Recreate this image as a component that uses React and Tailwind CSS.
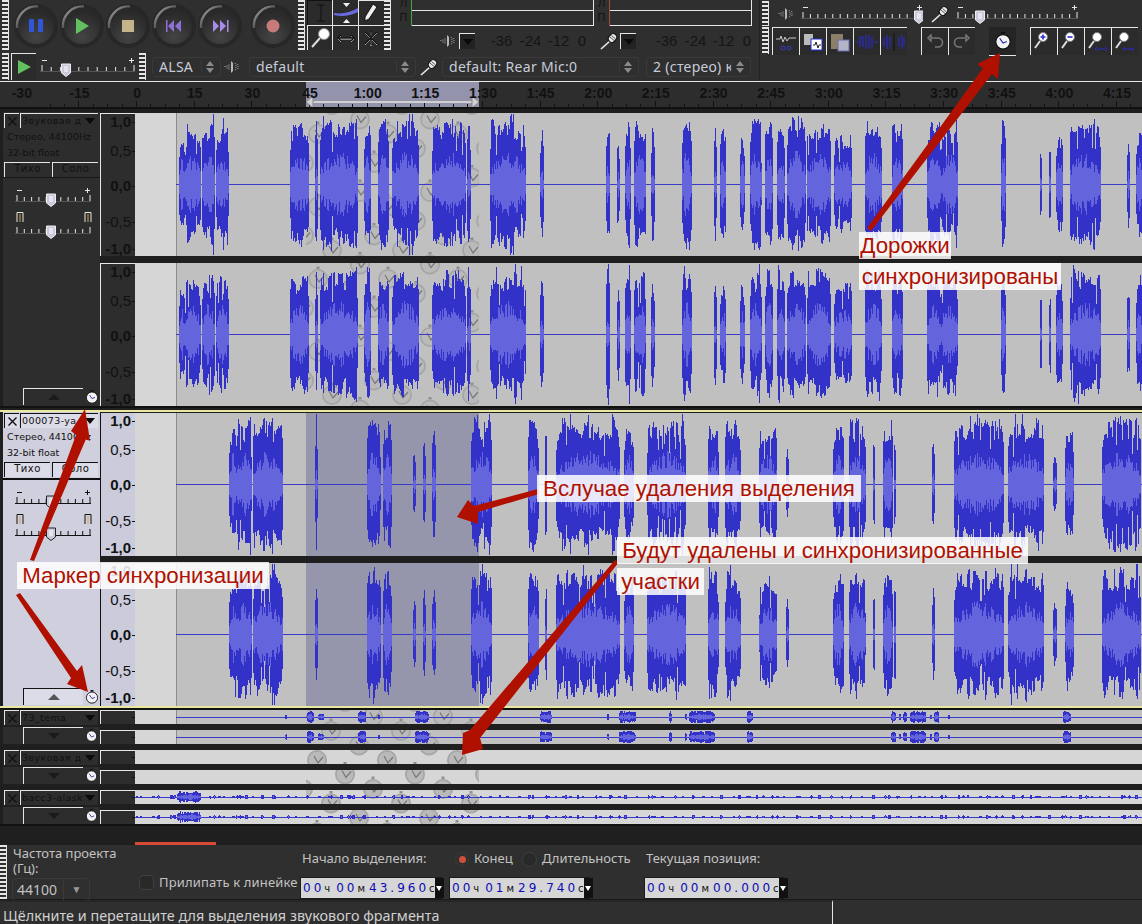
import React from "react";

const UI_FONT = { fontFamily: '"Noto Sans", "Open Sans", sans-serif' };

// waveform clusters: [from x, to x, amplitude] in page pixels
const CLUSTERS_A = [
  [179, 184, 0.85], [185, 200, 0.9], [202, 214, 0.95], [216, 228, 0.92], [290, 308, 0.95], [315, 317, 1], [320, 357, 1],
  [364, 370, 1], [378, 388, 1.05], [392, 418, 1], [432, 465, 1], [467, 470, 0.9], [490, 525, 1], [540, 543, 0.85],
  [606, 609, 1.05], [617, 619, 0.75], [625, 630, 0.95], [634, 645, 1], [651, 654, 0.85], [682, 691, 1], [714, 716, 0.85],
  [720, 725, 0.85], [740, 744, 0.8], [750, 761, 1], [765, 772, 1], [777, 784, 0.95], [787, 805, 1], [807, 830, 1],
  [834, 851, 0.8], [865, 881, 1], [892, 902, 0.95], [927, 940, 0.98], [941, 957, 0.95], [1001, 1005, 1], [1040, 1041, 0.75],
  [1049, 1050, 0.85], [1056, 1062, 0.8], [1070, 1100, 1], [1127, 1129, 0.8], [1136, 1142, 0.8],
];
const CLUSTERS_B = [
  [229, 236, 0.95], [237, 251, 0.98], [253, 282, 1], [315, 317, 1], [367, 380, 1.05], [383, 391, 1], [413, 415, 0.65],
  [423, 425, 0.72], [432, 435, 0.85], [471, 491, 1], [528, 538, 1], [545, 546, 1], [556, 619, 1], [624, 633, 0.9],
  [647, 685, 1], [708, 718, 0.95], [725, 740, 0.95], [759, 776, 0.9], [786, 788, 0.6], [833, 843, 0.95], [849, 865, 1],
  [873, 874, 0.8], [883, 892, 0.98], [894, 895, 0.9], [932, 934, 0.85], [954, 1003, 1], [1008, 1043, 1], [1053, 1056, 0.5],
  [1065, 1073, 0.78], [1102, 1140, 1],
];
const CLUSTERS_C = [
  [285, 286, 0.6], [307, 313, 1], [318, 323, 0.6], [358, 365, 1], [378, 379, 0.4], [415, 428, 1], [540, 551, 0.95],
  [607, 608, 0.7], [619, 635, 1], [669, 671, 0.9], [685, 686, 0.7], [689, 714, 1], [747, 752, 1], [891, 895, 0.8],
  [899, 900, 0.7], [903, 906, 0.9], [910, 925, 1], [930, 931, 0.6], [934, 938, 1], [948, 949, 0.4], [1063, 1070, 1],
];

function rng(seed) {
  let s = seed;
  return () => {
    s = (s * 16807) % 2147483647;
    return s / 2147483647;
  };
}

function buildClusters(seed) {
  // the noise track, small ticks the whole way along plus one bump
  const r = rng(seed);
  const out = [[177, 200, 0.85]];
  for (let x = 136; x < 1140; x += 2 + Math.floor(r() * 12)) {
    out.push([x, x + 1 + Math.floor(r() * 2), 0.2 + r() * 0.2]);
  }
  return out;
}

function wavePaths(clusters, H, seed, startX) {
  const r = rng(seed);
  const cy = H / 2;
  const full = H * 0.47;
  let peak = "";
  let rms = "";
  clusters.forEach(([x0, x1, amp]) => {
    const w = x1 - x0;
    let base = 0.8;
    let hold = 0;
    for (let x = x0; x <= x1; x++) {
      if (hold <= 0) {
        base = 0.66 + r() * 0.32;
        hold = 1 + Math.floor(r() * 3);
      }
      hold--;
      const t = w === 0 ? 0.5 : (x - x0) / w;
      const edge = x - x0 < 1 || x1 - x < 1 ? 0.78 : 1;
      let a = amp * base * edge;
      if (r() > 0.93) a *= 1.2;
      if (w > 10 && r() > 0.95) a *= 0.6;
      const up = Math.min(cy - 1, full * a * (0.94 + r() * 0.1));
      const down = Math.min(cy - 1, full * a * (0.9 + r() * 0.14));
      const px = x - startX + 0.5;
      peak += `M${px} ${(cy - up).toFixed(0)}V${(cy + down).toFixed(0)}`;
      const hump = 0.5 + 0.5 * Math.sin(Math.PI * t);
      const rr = full * amp * hump * (0.24 + r() * 0.26) * (w < 4 ? 0.6 : 1);
      rms += `M${px} ${(cy - Math.min(rr, up)).toFixed(0)}V${(cy + Math.min(rr, down)).toFixed(0)}`;
    }
  });
  return { peak, rms };
}

function Clock({ x, y }) {
  return (
    <g transform={`translate(${x} ${y})`}>
      <rect x="-1.5" y="-12.5" width="3" height="2.5" fill="#8f8f8f" />
      <circle r="10" fill="#a6a6a6" />
      <circle r="8.2" fill="#bababa" />
      <path d="M-3 -4L1 3L6 -3" fill="none" stroke="#777" strokeWidth="1.2" />
    </g>
  );
}

// one channel of the wave area, starts at page x=135
function Wave({ H, top, clusters, seed, selected, clock, from = 176, line = true, bg = "#c0c0c0" }) {
  const W = 1007;
  const { peak, rms } = wavePaths(clusters, H, seed, 135);
  const clocks = [];
  if (clock) {
    for (let k = -60; k < 60; k++) {
      const y = clock[1] + 14.5 * k;
      if (y < top - 14 || y > top + H + 14) continue;
      for (let m = -20; m < 20; m++) {
        const x = clock[0] + 28 * k + 70 * m;
        if (x > 290 && x < 495) clocks.push([x - 306, y - top]);
      }
    }
  }
  return (
    <svg width={W} height={H} className="block shrink-0">
      <rect width={W} height={H} fill="#d6d6d6" />
      <rect x={from - 135} width={W} height={H} fill={bg} />
      {from < 1000 && bg === "#c0c0c0" && <rect x={from - 135} width="1" height={H} fill="#8c8c8c" />}
      {selected && <rect x="171" width="173" height={H} fill="#9595ab" />}
      {clocks.length > 0 && (
        <svg x="171" width="173" height={H}>
          {clocks.map(([x, y], i) => (
            <Clock key={i} x={x} y={y} />
          ))}
        </svg>
      )}
      {line && <rect x={from - 135} y={Math.floor(H / 2)} width={W} height="1" fill="#3a3ac8" />}
      <path d={peak} stroke="#3232c8" strokeWidth="1" shapeRendering="crispEdges" />
      <path d={rms} stroke="#6464dc" strokeWidth="1" shapeRendering="crispEdges" />
    </svg>
  );
}

function Grip({ className = "" }) {
  return (
    <div
      className={`w-[7px] shrink-0 border-r border-[#e6e6e6] bg-[repeating-linear-gradient(180deg,#e6e6e6_0px,#e6e6e6_2px,transparent_2px,transparent_4px)] ${className}`}
    />
  );
}

function SyncIcon({ size = 14 }) {
  return (
    <svg width={size} height={size} viewBox="0 0 14 14" className="block shrink-0">
      <rect x="5.5" y="0" width="3" height="1.6" fill="#111" />
      <circle cx="7" cy="7.6" r="5.6" fill="#f2f2f2" stroke="#111" strokeWidth="0.9" />
      <path d="M4.5 5L7 8.6L10 7.4" fill="none" stroke="#2a2ab0" strokeWidth="0.9" />
    </svg>
  );
}

function TransportButton({ children }) {
  return (
    <svg width="46" height="50" viewBox="0 0 46 50" className="block shrink-0">
      <defs>
        <linearGradient id="arc" x1="0" y1="0" x2="1" y2="1">
          <stop offset="0" stopColor="#b4b4b4" />
          <stop offset="0.65" stopColor="#3c3c3c" />
        </linearGradient>
        <radialGradient id="well" cx="0.5" cy="0.8" r="0.7">
          <stop offset="0" stopColor="#444" />
          <stop offset="1" stopColor="#292929" />
        </radialGradient>
      </defs>
      <circle cx="23" cy="25" r="22" fill="#232323" opacity="0.7" />
      <circle cx="23" cy="25" r="18" fill="url(#well)" />
      <path d="M4 27A19.5 19.5 0 0 1 25 5.5" fill="none" stroke="url(#arc)" strokeWidth="2.4" />
      {children}
    </svg>
  );
}

function ToolButton({ children, black, className = "" }) {
  return (
    <div
      className={`flex h-[25px] w-[26px] shrink-0 items-center justify-center border-t border-l ${
        black ? "border-[#111]" : "border-[#e6e6e6]"
      } bg-[#2b2b2b] ${className}`}
    >
      {children}
    </div>
  );
}

function Slider({ width, thumb, ticks = 11, labels = true, light }) {
  const stroke = light ? "#111" : "#e6e6e6";
  const ln = light ? "#111" : "#555";
  const y = 10;
  const marks = [];
  for (let i = 0; i < ticks; i++) marks.push(1.5 + (i * (width - 3)) / (ticks - 1));
  return (
    <svg width={width} height="20" className="block shrink-0">
      {labels && <rect x="2" y="3" width="5" height="1" fill={stroke} />}
      {labels && <path d={`M${width - 6} 3.5h5M${width - 3.5} 1v5`} stroke={stroke} />}
      <rect x="0" y={y + 4} width={width} height="1" fill={ln} />
      {marks.map((m, i) => (
        <rect key={i} x={m} y={i === 0 || i === ticks - 1 ? y - 2 : y} width="1" height={i === 0 || i === ticks - 1 ? 6 : 4} fill={stroke} />
      ))}
      <path
        d={`M${thumb - 4.5} 7h9v9l-4.5 3.5l-4.5 -3.5z`}
        fill="#c9cadb"
        stroke={light ? "#222" : "#eee"}
      />
      <path d={`M${thumb - 2} 10h4M${thumb - 2} 12h4M${thumb - 2} 14h4`} stroke="#fff" />
    </svg>
  );
}

function Speaker({ color = "#b8b8b8" }) {
  return (
    <svg width="16" height="16" viewBox="0 0 16 16" className="block shrink-0">
      <path d="M6 5.5v5M4 6.5v3M2 7v2" stroke={color} strokeDasharray="1 1" />
      <path d="M8 2l2 2v8l-2 2z" fill={color} />
      <path d="M12 4q2 4 0 8M14.5 5q1 3 0 6" stroke={color} fill="none" strokeDasharray="1 1" />
    </svg>
  );
}

function Mic({ size = 18 }) {
  return (
    <svg width={size} height={size} viewBox="0 0 18 18" className="block shrink-0">
      <path d="M10 9L1 17" stroke="#e8e8e8" strokeWidth="1.6" />
      <rect x="9" y="1.5" width="7" height="9" rx="3.4" transform="rotate(40 12.5 6)" fill="#e8e8e8" stroke="#111" />
      <path d="M10 5l4 3.4M11.5 3.5l4 3.4" stroke="#555" />
    </svg>
  );
}

function Combo({ label, className = "" }) {
  return (
    <div
      className={`flex h-[20px] shrink-0 items-center justify-between rounded-sm border border-[#3a3a3a] bg-[#2f2f2f] pr-[6px] pl-[6px] text-[14px] tracking-[0.3px] whitespace-nowrap text-[#c7ccd8] ${className}`}
    >
      <span className="overflow-hidden">{label}</span>
      <span className="flex shrink-0 flex-col gap-[2px] border-l border-[#3a3a3a] pl-[4px]">
        <span className="h-0 w-0 border-x-[4px] border-b-[5px] border-x-transparent border-b-[#8a8a8a]" />
        <span className="h-0 w-0 border-x-[4px] border-t-[5px] border-x-transparent border-t-[#8a8a8a]" />
      </span>
    </div>
  );
}

function Meter({ lead, className }) {
  return (
    <div className={`flex h-[26px] shrink-0 ${className}`}>
      <div className="flex w-[15px] flex-col items-center text-[11px] leading-[13px] text-[#151515]" style={{ fontFamily: '"DejaVu Sans", sans-serif' }}>
        <span className="-mt-[3px] h-[13px]">Л</span>
        <span className="mt-[1px]">П</span>
      </div>
      <div className={`flex h-full flex-1 flex-col border-l ${lead} border-r border-r-[#e6e6e6]`}>
        <div className="h-[11px] border-b border-[#e6e6e6]" />
        <div className="flex-1 border-b border-[#e6e6e6]" />
      </div>
    </div>
  );
}

function Dropdown() {
  return (
    <div className="flex h-[16px] w-[16px] shrink-0 items-center justify-center border-t border-l border-[#e6e6e6] bg-[#222]">
      <span className="h-0 w-0 border-x-[5px] border-t-[6px] border-x-transparent border-t-[#0a0a0a]" />
    </div>
  );
}

function MeterScale({ className = "" }) {
  return (
    <div className={`flex text-[15px] text-[#151515] ${className}`} style={{ fontFamily: '"Liberation Sans", sans-serif' }}>
      <span className="w-[29px] text-center">-36</span>
      <span className="w-[29px] text-center">-24</span>
      <span className="w-[27px] text-center">-12</span>
      <span className="w-[20px] text-center">0</span>
    </div>
  );
}

const RULER_LABELS = ["-30", "-15", "0", "15", "30", "45", "1:00", "1:15", "1:30", "1:45", "2:00", "2:15", "2:30", "2:45", "3:00", "3:15", "3:30", "3:45", "4:00", "4:15"];

function TopBars() {
  return (
    <div className="flex h-[81px] shrink-0 bg-[#2f2f2f]" style={UI_FONT}>
      <div className="flex w-[760px] shrink-0 flex-col border-r border-[#222]">
        {/* first row */}
        <div className="flex h-[52px] shrink-0">
          <Grip className="ml-[2px] h-[50px]" />
          <div className="flex items-center pl-[4px]">
            <TransportButton>
              <rect x="16" y="18" width="5" height="13" rx="1" fill="#2f55d8" />
              <rect x="25" y="18" width="5" height="13" rx="1" fill="#2f55d8" />
            </TransportButton>
            <TransportButton>
              <path d="M17 17l13 8l-13 8z" fill="#62c060" />
            </TransportButton>
            <TransportButton>
              <rect x="17" y="19" width="12" height="12" fill="#c4b48a" />
            </TransportButton>
            <TransportButton>
              <rect x="15" y="19" width="1.5" height="12" fill="#8f70d8" />
              <path d="M23 19v12l-6 -6zM30 19v12l-6 -6z" fill="#8f70d8" />
            </TransportButton>
            <TransportButton>
              <path d="M16 19v12l6 -6zM23 19v12l6 -6z" fill="#a98be8" />
              <rect x="30" y="19" width="1.5" height="12" fill="#a98be8" />
            </TransportButton>
            <div className="ml-[7px]">
              <TransportButton>
                <circle cx="23" cy="25" r="6.5" fill="#c77a7a" />
              </TransportButton>
            </div>
          </div>
          <Grip className="ml-[2px] h-[50px]" />
          {/* tools */}
          <div className="ml-[2px] grid h-[50px] w-[76px] shrink-0 grid-cols-3">
            <ToolButton black>
              <svg width="14" height="18" viewBox="0 0 14 18">
                <path d="M3 1h8M7 1v16M3 17h8" stroke="#111" fill="none" />
              </svg>
            </ToolButton>
            <ToolButton className="border-t-0">
              <svg width="24" height="20" viewBox="0 0 24 20">
                <path d="M0 10Q12 12 24 5v4Q12 15 0 12z" fill="#6a6ae0" />
                <path d="M9 0h7l-3.5 4zM9 20h7l-3.5 -4z" fill="#f2f2f2" />
              </svg>
            </ToolButton>
            <ToolButton>
              <svg width="16" height="20" viewBox="0 0 16 20">
                <path d="M10 1l4 3l-8 12l-4 2l0 -4z" fill="#eee" stroke="#111" />
              </svg>
            </ToolButton>
            <ToolButton>
              <svg width="22" height="22" viewBox="0 0 22 22">
                <path d="M10 11L2 20" stroke="#ddd" strokeWidth="2" />
                <circle cx="14" cy="7" r="5.5" fill="#fff" stroke="#888" />
              </svg>
            </ToolButton>
            <ToolButton>
              <svg width="20" height="12" viewBox="0 0 20 12">
                <path d="M2 7h16M5 4L2 7l3 3M15 4l3 3l-3 3" stroke="#ddd" fill="none" strokeWidth="1" />
                <path d="M2 6h16M5 3L2 6l3 3M15 3l3 3l-3 3" stroke="#111" fill="none" strokeWidth="1.2" />
              </svg>
            </ToolButton>
            <ToolButton>
              <svg width="16" height="16" viewBox="0 0 16 16">
                <path d="M2 3L14 15M14 3L2 15M8 2v14" stroke="#ddd" strokeWidth="1" />
                <path d="M2 2L14 14M14 2L2 14M8 1v14" stroke="#111" strokeWidth="1.2" />
              </svg>
            </ToolButton>
          </div>
          <Grip className="ml-[1px] h-[50px]" />
          {/* meters */}
          <div className="flex flex-col pl-[1px]">
            <div className="flex">
              <Meter lead="border-l-[#39a83e]" className="ml-[4px] w-[198px]" />
              <Meter lead="border-l-[#a84a3e]" className="w-[158px]" />
            </div>
            <div className="mt-[4px] flex items-center pl-[47px]">
              <Speaker />
              <span className="w-[4px]" />
              <Dropdown />
              <MeterScale className="ml-[12px]" />
              <span className="ml-[8px]">
                <Mic />
              </span>
              <span className="w-[2px]" />
              <Dropdown />
              <MeterScale className="ml-[16px]" />
            </div>
          </div>
        </div>
        {/* device row */}
        <div className="flex h-[29px] shrink-0 items-center">
          <Grip className="ml-[2px] h-[27px]" />
          <div className="ml-[2px] flex h-[27px] w-[25px] shrink-0 items-center justify-center border-t border-l border-[#e6e6e6] bg-[#2b2b2b]">
            <svg width="16" height="16" viewBox="0 0 16 16">
              <path d="M2 1l13 7l-13 7z" fill="#62c060" />
            </svg>
          </div>
          <div className="ml-[4px]">
            <Slider width={95} thumb={26} />
          </div>
          <Grip className="ml-[4px] h-[27px]" />
          <Combo label="ALSA" className="ml-[6px] w-[69px]" />
          <span className="ml-[2px]">
            <Speaker />
          </span>
          <Combo label="default" className="ml-[10px] w-[167px]" />
          <span className="ml-[4px]">
            <Mic />
          </span>
          <Combo label="default: Rear Mic:0" className="ml-[4px] w-[197px]" />
          <Combo label="2 (стерео) к" className="ml-[7px] w-[105px]" />
        </div>
      </div>
      {/* right side */}
      <div className="flex min-w-0 flex-1 flex-col">
        <div className="flex h-[27px] shrink-0 items-center">
          <Grip className="ml-[2px] h-[25px]" />
          <span className="ml-[8px]">
            <Speaker />
          </span>
          <div className="ml-[8px]">
            <Slider width={122} thumb={118} ticks={17} />
          </div>
          <span className="ml-[8px]">
            <Mic />
          </span>
          <div className="ml-[7px]">
            <Slider width={122} thumb={24} ticks={17} />
          </div>
        </div>
        <div className="flex h-[29px] shrink-0 items-start">
          <Grip className="ml-[2px] h-[27px]" />
          <div className="ml-[3px] flex">
            <ToolButton className="h-[28px] w-[27px]">
              <svg width="20" height="20" viewBox="0 0 20 20">
                <path d="M0 7h4l1 -3l2 6l2 -5l2 4l2 -3h7" stroke="#c8c8c8" fill="none" />
                <circle cx="7" cy="16" r="2" fill="none" stroke="#3a3ad0" />
                <circle cx="13" cy="16" r="2" fill="none" stroke="#3a3ad0" />
              </svg>
            </ToolButton>
            <ToolButton className="h-[28px] w-[27px]">
              <svg width="20" height="20" viewBox="0 0 20 20">
                <rect x="1" y="2" width="9" height="11" fill="#bbb" />
                <rect x="8" y="7" width="11" height="11" fill="#fff" stroke="#2a2ad0" />
                <path d="M10 13h2l1 -3l2 6l1 -3h2" stroke="#222" fill="none" />
              </svg>
            </ToolButton>
            <ToolButton className="h-[28px] w-[27px]">
              <svg width="20" height="20" viewBox="0 0 20 20">
                <rect x="1" y="2" width="12" height="15" fill="#8a8068" />
                <rect x="8" y="8" width="11" height="11" fill="#b4b4c8" stroke="#6a6ab0" />
              </svg>
            </ToolButton>
            <ToolButton className="h-[28px] w-[27px]">
              <svg width="22" height="20" viewBox="0 0 22 20">
                <path d="M0 10h3M4 5v10M4 5h3M7 5v10M10 3v14M13 3v14M16 5v10M18 10h4" stroke="#2a2ad8" strokeWidth="1.1" fill="none" />
              </svg>
            </ToolButton>
            <ToolButton className="h-[28px] w-[27px]">
              <svg width="22" height="20" viewBox="0 0 22 20">
                <path d="M1 6v8M4 3v14M7 5v10M16 5v10M19 3v14M21 6v8" stroke="#2a2ad8" strokeWidth="1.1" fill="none" />
                <path d="M11 1v18" stroke="#111" />
              </svg>
            </ToolButton>
          </div>
          <div className="ml-[14px] flex">
            <ToolButton className="h-[28px] w-[27px]">
              <svg width="18" height="16" viewBox="0 0 18 16">
                <path d="M5 4h7a4 4 0 0 1 0 9h-3M5 1v6L2 4z" stroke="#777" fill="none" strokeWidth="1.5" />
              </svg>
            </ToolButton>
            <ToolButton className="h-[28px] w-[27px]">
              <svg width="18" height="16" viewBox="0 0 18 16">
                <path d="M13 4H6a4 4 0 0 0 0 9h3M13 1v6l3 -3z" stroke="#777" fill="none" strokeWidth="1.5" />
              </svg>
            </ToolButton>
          </div>
          <div className="ml-[14px] flex h-[29px] w-[27px] shrink-0 items-center justify-center border-b border-[#e6e6e6] bg-[#252525]">
            <SyncIcon size={18} />
          </div>
          <div className="ml-[14px] flex">
            {[
              <path key="a" d="M6.5 5h5M9 2.5v5" stroke="#2a2ad0" strokeWidth="1.6" />,
              <path key="b" d="M6.5 5h5" stroke="#2a2ad0" strokeWidth="1.6" />,
              <path key="c" d="M9 17h8M9 15l-2 2l2 2M17 15l2 2l-2 2" stroke="#2a2ad0" fill="none" />,
              <path key="d" d="M9 17h9M9 15v4M18 15v4" stroke="#2a2ad0" fill="none" />,
            ].map((p, i) => (
              <ToolButton key={i} className="h-[28px] w-[27px]">
                <svg width="20" height="20" viewBox="0 0 20 20">
                  <path d="M6 9L1 16" stroke="#ddd" strokeWidth="2" />
                  <circle cx="9" cy="5" r="4.5" fill="#fff" stroke="#777" />
                  {p}
                </svg>
              </ToolButton>
            ))}
          </div>
        </div>
      </div>
    </div>
  );
}

function TimeRuler() {
  const ticks = [];
  for (let i = -6; i < 90; i++) {
    const x = 136 + (i * 57.65) / 4;
    ticks.push(`M${x.toFixed(0)}.5 ${i % 4 === 0 ? 19 : 22}V25`);
  }
  return (
    <div className="relative h-[26px] shrink-0 overflow-hidden border-t border-[#e6e6e6] bg-[#2d2d2d]">
      <div className="absolute top-0 left-[306px] h-full w-[173px] bg-[#9393ab]" />
      <svg width="1142" height="25" className="absolute top-0 left-0">
        <path d={ticks.join("")} stroke="#111" />
        <path d="M306 20h173" stroke="#d0d0d0" strokeWidth="2" />
        <path d="M313 14l-7 6l7 6zM472 14l7 6l-7 6z" fill="#d0d0d0" stroke="#888" />
      </svg>
      <div
        className="relative -ml-[7px] flex pt-[3px] text-[14px] leading-[16px] font-bold text-[#111]"
        style={{ fontFamily: '"Liberation Sans", sans-serif' }}
      >
        {RULER_LABELS.map((l) => (
          <span key={l} className="w-[57.65px] shrink-0 text-center">
            {l}
          </span>
        ))}
      </div>
    </div>
  );
}

function RulerLabel({ text, bold, className = "" }) {
  return (
    <div className={`flex h-[16px] items-center justify-end ${className}`}>
      <span className={bold ? "font-bold" : ""}>{text}</span>
      <span className="ml-[1px] h-px w-[3px] bg-[#111]" />
    </div>
  );
}

function VerticalRuler({ light }) {
  return (
    <div
      className={`h-[143px] w-[35px] shrink-0 text-[15px] text-[#111] ${
        light ? "border-l border-[#111] bg-[#cbcbdc]" : "border-t border-l border-[#e6e6e6] bg-[#2d2d2d]"
      }`}
      style={{ fontFamily: '"Liberation Sans", sans-serif' }}
    >
      <RulerLabel text="1,0" bold />
      <RulerLabel text="0,5" className="mt-[13px]" />
      <RulerLabel text="0,0" bold className="mt-[19px]" />
      <RulerLabel text="-0,5" className="mt-[20px]" />
      <RulerLabel text="-1,0" bold className="mt-[11px]" />
    </div>
  );
}

function CloseBtn({ light }) {
  return (
    <div className={`flex h-[15px] w-[15px] shrink-0 items-center justify-center border-t border-l ${light ? "border-[#111] bg-[#dcdce8]" : "border-[#e6e6e6] bg-[#2d2d2d]"}`}>
      <svg width="9" height="9" viewBox="0 0 9 9">
        <path d="M0.5 0.5L8.5 8.5M8.5 0.5L0.5 8.5" stroke="#111" strokeWidth="1.4" />
      </svg>
    </div>
  );
}

function TitleRow({ name, light }) {
  return (
    <div className="flex h-[15px] shrink-0 gap-[1px] pl-[1px]">
      <CloseBtn light={light} />
      <div className={`flex h-[15px] w-[78px] shrink-0 items-center justify-between overflow-hidden border-t border-l pr-[3px] pl-[1px] text-[9.5px] tracking-[0.4px] whitespace-nowrap text-[#111] ${light ? "border-[#111] bg-[#dcdce8]" : "border-[#e6e6e6] bg-[#2d2d2d]"}`}>
        <span className="min-w-0 overflow-hidden">{name}</span>
        <span className="ml-[1px] h-0 w-0 shrink-0 border-x-[5px] border-t-[6px] border-x-transparent border-t-[#0a0a0a]" />
      </div>
    </div>
  );
}

function PanIcon({ light }) {
  const s = light ? "#111" : "#e6e6e6";
  return (
    <svg width="9" height="12" viewBox="0 0 9 12" className="block shrink-0">
      <path d="M1 11V1.5H7V11" fill="none" stroke={s} />
      <path d="M4 3V11" stroke="#e0a050" />
    </svg>
  );
}

function TrackPanel({ name, light }) {
  const border = light ? "border-[#111] bg-[#dcdce8]" : "border-[#e6e6e6] bg-[#2d2d2d]";
  return (
    <div
      className={`flex h-[294px] w-[97px] shrink-0 flex-col pt-[1px] text-[#111] ${light ? "bg-[#cfcfde]" : "bg-[#2d2d2d]"}`}
      style={{ fontFamily: '"DejaVu Sans", sans-serif' }}
    >
      <TitleRow name={name} light={light} />
      <div className="mt-[1px] pl-[4px] text-[9.5px] leading-[16px]">Стерео, 44100Hz</div>
      <div className="pl-[4px] text-[9.5px] leading-[16px]">32-bit float</div>
      <div className={`mt-[1px] flex gap-[2px] pl-[1px] text-[10px] tracking-[0.5px] ${light ? "border-b-2 border-[#111] pb-[1px]" : "border-b border-[#181818]"}`}>
        <div className={`h-[15px] w-[46px] border-t border-l text-center leading-[12px] ${border}`}>Тихо</div>
        <div className={`h-[15px] w-[46px] border-t border-l text-center leading-[12px] ${border}`}>Соло</div>
      </div>
      <div className="mt-[9px] pl-[12px]">
        <Slider width={76} thumb={36} light={light} />
      </div>
      <div className="mt-[4px] flex justify-between pr-[7px] pl-[13px]">
        <PanIcon light={light} />
        <PanIcon light={light} />
      </div>
      <div className="-mt-[4px] pl-[12px]">
        <Slider width={76} thumb={36} labels={false} light={light} />
      </div>
      <div className="mt-auto flex items-center pb-[1px]">
        <div className={`ml-[20px] flex h-[17px] w-[60px] items-center justify-center border-t border-l ${light ? "border-[#111] bg-[#dcdce8]" : "border-[#e6e6e6] bg-[#2d2d2d]"}`}>
          <span className={`h-0 w-0 border-x-[6px] border-b-[6px] border-x-transparent ${light ? "border-b-[#555]" : "border-b-[#1a1a1a]"}`} />
        </div>
        <div className="ml-[2px]">
          <SyncIcon size={14} />
        </div>
      </div>
    </div>
  );
}

function BigTrack({ name, clusters, seed, light, top, clock }) {
  return (
    <div className={`flex shrink-0 ${light ? "border-y-2 border-[#e8e8a0]" : ""}`}>
      <div className="bg-[#1f1f1f] pl-[3px]">
        <TrackPanel name={name} light={light} />
      </div>
      <div className="flex flex-col">
        {[0, 1].map((c) => (
          <div key={c} className={c === 1 ? "mt-[7px] flex" : "mt-px flex"}>
            <VerticalRuler light={light} />
            <Wave
              H={143}
              top={top + c * 150}
              clusters={clusters}
              seed={seed + c * 31}
              selected={light}
              clock={clock}
            />
          </div>
        ))}
      </div>
    </div>
  );
}

function SmallTrack({ name, top, clusters, seed, from, bg, line }) {
  return (
    <div className="flex h-[34px] shrink-0 bg-[#1f1f1f]">
      <div className="flex w-[100px] shrink-0 flex-col bg-[#1f1f1f] pl-[3px]" style={{ fontFamily: '"DejaVu Sans", sans-serif' }}>
        <TitleRow name={name} />
        <div className="mt-[2px] flex h-[17px] items-center bg-[#2d2d2d] pl-[20px]">
          <div className="flex h-[17px] w-[60px] items-center justify-center border-t border-l border-[#e6e6e6]">
            <span className="h-0 w-0 border-x-[6px] border-t-[6px] border-x-transparent border-t-[#1a1a1a]" />
          </div>
          <div className="ml-[2px]">
            <SyncIcon size={13} />
          </div>
        </div>
      </div>
      <div className="flex flex-col">
        {[0, 1].map((c) => (
          <div key={c} className={c === 1 ? "mt-[6px] flex" : "flex"}>
            <div className="flex h-[14px] w-[35px] shrink-0 items-center justify-end border-t border-l border-[#e6e6e6] bg-[#2d2d2d]">
              <span className="h-px w-[3px] bg-[#111]" />
            </div>
            <Wave H={14} top={top + c * 20} clusters={clusters} seed={seed + c * 3} clock={[317, 763]} from={from} bg={bg} line={line} />
          </div>
        ))}
      </div>
    </div>
  );
}

function TimeField({ h, m, s, ms, className = "" }) {
  return (
    <div className={`flex h-[22px] shrink-0 items-center border border-[#1c1c1c] bg-[#d6d6d6] pl-[2px] text-[#0c0cb4] ${className}`} style={{ fontFamily: '"DejaVu Sans", sans-serif' }}>
      <span className="text-[12px] tracking-[3px]">{h}</span>
      <span className="mr-[6px] text-[10px] text-[#111]">ч</span>
      <span className="text-[12px] tracking-[3px]">{m}</span>
      <span className="mr-[4px] text-[10px] text-[#111]">м</span>
      <span className="text-[12px] tracking-[3px]">
        {s}.{ms}
      </span>
      <span className="text-[10px] text-[#111]">c</span>
      <div className="ml-auto flex h-full w-[9px] shrink-0 items-center justify-center bg-[#111]">
        <span className="h-0 w-0 border-x-[3px] border-t-[5px] border-x-transparent border-t-white" />
      </div>
    </div>
  );
}

function SelectionBar() {
  return (
    <div className="flex h-[55px] shrink-0 border-b border-[#1a1a1a] bg-[#2f2f2f] text-[13px] text-[#c2c2c2]" style={UI_FONT}>
      <Grip className="h-[54px] w-[5px]" />
      <div className="w-[125px] shrink-0 pt-[1px] pl-[6px] leading-[15px]">
        <div>Частота проекта</div>
        <div>(Гц):</div>
        <div className="mt-[2px] -ml-[1px] flex h-[23px] w-[78px] items-center rounded-sm border border-[#3a3a3a] pl-[4px] text-[14px]">
          44100
          <span className="ml-auto flex h-full w-[26px] items-center justify-center border-l border-[#3a3a3a] text-[10px] text-[#9a9a9a]">▼</span>
        </div>
      </div>
      <div className="flex w-[168px] shrink-0 flex-col justify-end pb-[7px] pl-[7px]">
        <div className="flex items-center">
          <span className="h-[15px] w-[15px] shrink-0 rounded-sm border border-[#3f3f3f] bg-[#292929]" />
          <span className="ml-[5px] whitespace-nowrap tracking-[0.15px]">Прилипать к линейке</span>
        </div>
      </div>
      <div className="flex min-w-0 flex-1 flex-col">
        <div className="flex h-[32px] shrink-0 items-center pb-[4px] whitespace-nowrap">
          <span className="ml-[2px] w-[153px] shrink-0">Начало выделения:</span>
          <span className="flex h-[14px] w-[14px] shrink-0 items-center justify-center rounded-full border border-[#3a3a3a]">
            <span className="h-[7px] w-[7px] rounded-full bg-[#d0503c]" />
          </span>
          <span className="ml-[5px] w-[48px] shrink-0">Конец</span>
          <span className="h-[15px] w-[15px] shrink-0 rounded-full border border-[#3f3f3f] bg-[#292929]" />
          <span className="ml-[5px] w-[104px] shrink-0">Длительность</span>
          <span>Текущая позиция:</span>
        </div>
        <div className="flex items-start">
          <TimeField h="00" m="00" s="43" ms="960" className="w-[142px]" />
          <TimeField h="00" m="01" s="29" ms="740" className="ml-[7px] w-[141px]" />
          <TimeField h="00" m="00" s="00" ms="000" className="ml-[54px] w-[140px]" />
        </div>
      </div>
    </div>
  );
}

function StatusBar() {
  return (
    <div className="flex h-[24px] flex-1 bg-[#2f2f2f] text-[14.4px] whitespace-nowrap text-[#d0d0d0]" style={UI_FONT}>
      <div className="h-full w-[833px] shrink-0 border-t-2 border-r border-t-[#262626] border-r-[#e6e6e6] pt-[4px] pl-[3px] leading-[20px]">
        Щёлкните и перетащите для выделения звукового фрагмента
      </div>
    </div>
  );
}

function Label({ className, children }) {
  return (
    <div className={`absolute flex h-[27px] items-center justify-center bg-white/85 text-[22.3px] whitespace-nowrap text-[#b01000] ${className}`}>
      {children}
    </div>
  );
}

// arrows + callouts drawn over the app
function Annotations() {
  return (
    <div className="pointer-events-none absolute inset-0" style={{ fontFamily: '"Liberation Sans", sans-serif' }}>
      <svg width="1142" height="924" className="absolute top-0 left-0">
        <g fill="#b01000">
          <path d="M867 228L983 68L977 64L1000 53L998 79L992 74L871 231Z" />
          <path d="M30 560L76 435L71 431L85 409L90 441L86 439L34 561Z" />
          <path d="M16 595L71 678L67 684L88 692L82 665L77 671L20 593Z" />
          <path d="M538 489L474 506L468 500L457 517L478 524L478 512L539 494Z" />
          <path d="M615 560L470 730L463 733L462 755L483 749L480 738L619 562Z" />
        </g>
      </svg>
      <Label className="top-[232px] left-[859px] w-[92px]">Дорожки</Label>
      <Label className="top-[263px] left-[859px] w-[202px]">синхронизированы</Label>
      <Label className="top-[475px] left-[537px] w-[324px]">Вслучае удаления выделения</Label>
      <Label className="top-[537px] left-[617px] w-[411px]">Будут удалены и синхронизированные</Label>
      <Label className="top-[568px] left-[617px] w-[87px]">участки</Label>
      <Label className="top-[562px] left-[17px] w-[252px]">Маркер синхронизации</Label>
    </div>
  );
}

const NOISE = buildClusters(77);

export default function App() {
  return (
    <div className="relative flex h-[924px] w-[1142px] flex-col overflow-hidden bg-[#1f1f1f]">
      <TopBars />
      <TimeRuler />
      <div className="h-[5px] shrink-0 border-t-2 border-[#111]" />
      <BigTrack name="Звуковая д" clusters={CLUSTERS_A} seed={11} top={114} clock={[318, 135]} />
      <div className="h-[4px] shrink-0 border-t-2 border-[#111]" />
      <BigTrack name="000073-ya" clusters={CLUSTERS_B} seed={29} top={414} light />
      <div className="h-[2px] shrink-0 bg-[#111]" />
      <div className="flex shrink-0 flex-col gap-[6px]">
        <SmallTrack name="73_tema" top={713} clusters={CLUSTERS_C} seed={51} from={176} bg="#c0c0c0" />
        <SmallTrack name="Звуковая д" top={753} clusters={[]} seed={61} from={2000} line={false} bg="#d6d6d6" />
        <SmallTrack name="bacc3-alask" top={793} clusters={NOISE} seed={71} from={135} bg="#d6d6d6" />
      </div>
      <div className="h-[18px] shrink-0 border-t-2 border-[#111]" />
      <div className="ml-[135px] h-[3px] w-[81px] shrink-0 bg-[#d64a36]" />
      <SelectionBar />
      <StatusBar />
      <Annotations />
    </div>
  );
}
